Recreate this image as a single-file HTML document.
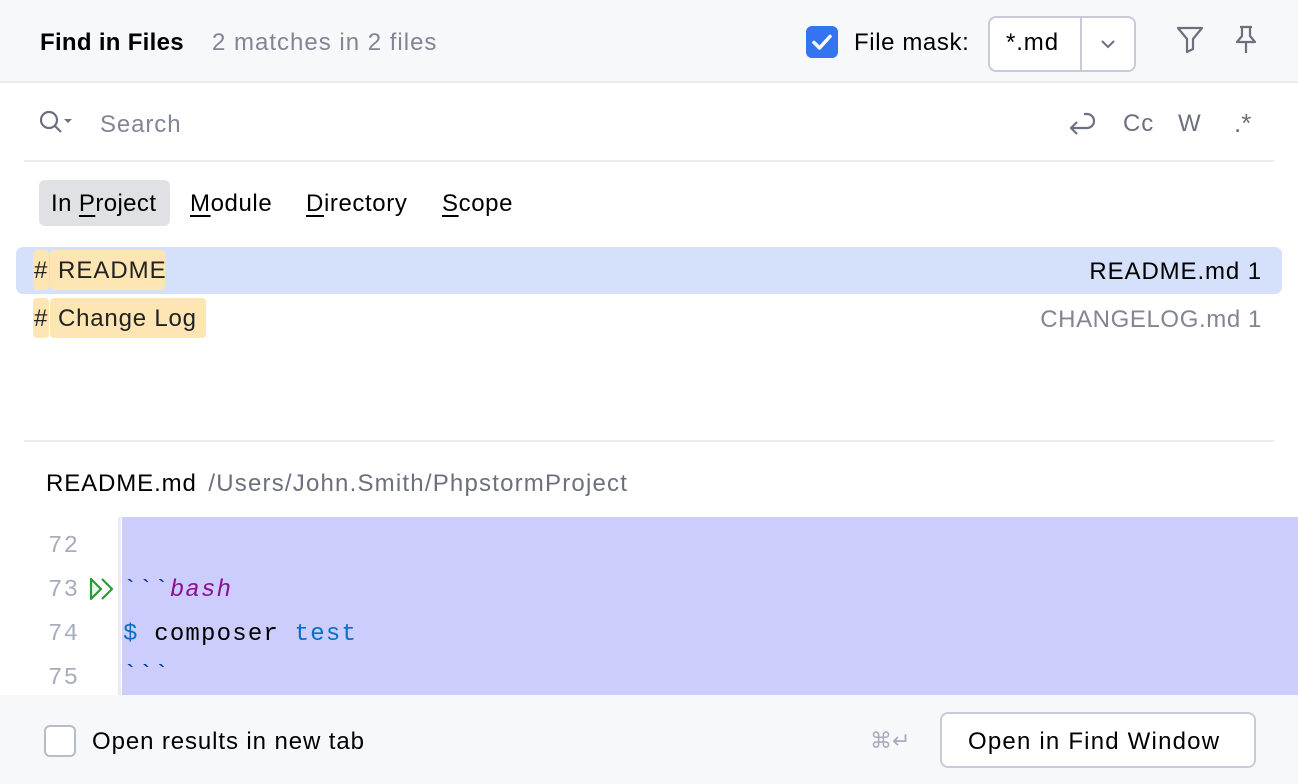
<!DOCTYPE html>
<html><head><meta charset="utf-8"><style>
*{margin:0;padding:0;box-sizing:border-box}
body{width:1298px;height:784px;overflow:hidden;background:#fff;font-family:"Liberation Sans",sans-serif;color:#000;position:relative}
.abs{position:absolute;white-space:nowrap}
.hdr{position:absolute;left:0;top:0;width:1298px;height:83px;background:#f7f8fa;border-bottom:2px solid #ebecf0}
.ftr{position:absolute;left:0;top:695px;width:1298px;height:89px;background:#f7f8fa}
.t24{font-size:24px;letter-spacing:0.9px}
.mono{font-family:"Liberation Mono",monospace;font-size:24px;letter-spacing:1.2px}
.u{text-decoration:underline;text-underline-offset:4px;text-decoration-thickness:2px}
.hl{position:absolute;background:#fde6b3;border-radius:4px}
</style></head><body>
<div class="hdr"></div>
<div class="abs t24" style="left:40px;top:29px;font-weight:bold;letter-spacing:0.3px">Find in Files</div>
<div class="abs t24" style="left:212px;top:29px;color:#818594;letter-spacing:1.0px">2 matches in 2 files</div>
<div class="abs" style="left:806px;top:26px;width:32px;height:32px;background:#3574f0;border-radius:6px">
<svg width="32" height="32" viewBox="0 0 32 32"><path d="M8 16.5l5.5 5.5L24 10.5" stroke="#fff" stroke-width="3.5" fill="none" stroke-linecap="round" stroke-linejoin="round"/></svg></div>
<div class="abs t24" style="left:854px;top:29px;letter-spacing:0.6px">File mask:</div>
<div class="abs" style="left:988px;top:16px;width:148px;height:56px;background:#fff;border:2px solid #c9ccd6;border-radius:8px"></div>
<div class="abs" style="left:1080px;top:18px;width:2px;height:52px;background:#c9ccd6"></div>
<div class="abs t24" style="left:1006px;top:29px">*.md</div>
<svg class="abs" style="left:1096px;top:36px" width="24" height="16"><path d="M6 5l6 6 6-6" stroke="#6c707e" stroke-width="2" fill="none"/></svg>
<svg class="abs" style="left:1174px;top:24px" width="32" height="32"><path d="M4 4h24l-9 11v10l-6 3V15z" stroke="#6c707e" stroke-width="2.2" fill="none" stroke-linejoin="round"/></svg>
<svg class="abs" style="left:1230px;top:24px" width="32" height="32"><path d="M10 3h12M12 3v9l-5 6h18l-5-6V3M16 18v11" stroke="#6c707e" stroke-width="2.2" fill="none" stroke-linejoin="round"/></svg>

<svg class="abs" style="left:38px;top:108px" width="36" height="32"><circle cx="11" cy="12" r="8" stroke="#6c707e" stroke-width="2.2" fill="none"/><path d="M17 18l6 6" stroke="#6c707e" stroke-width="2.2"/><path d="M26 11h8l-4 4z" fill="#6c707e"/></svg>
<div class="abs t24" style="left:100px;top:111px;color:#818594">Search</div>
<svg class="abs" style="left:1064px;top:108px" width="36" height="30"><path d="M8 22h15a7 7 0 0 0 0-14h-3M13 16l-6 6 6 6" stroke="#6c707e" stroke-width="2.2" fill="none" stroke-linejoin="round" transform="translate(0,-2)"/></svg>
<div class="abs t24" style="left:1123px;top:110px;color:#6c707e">Cc</div>
<div class="abs t24" style="left:1178px;top:110px;color:#6c707e">W</div>
<div class="abs" style="left:1234px;top:108px;color:#6c707e;font-size:26px">.*</div>
<div class="abs" style="left:24px;top:160px;width:1250px;height:2px;background:#ebecf0"></div>

<div class="abs" style="left:39px;top:180px;width:131px;height:46px;background:#dfe1e5;border-radius:6px"></div>
<div class="abs t24" style="left:51px;top:190px;letter-spacing:0.4px">In <span class="u">P</span>roject</div>
<div class="abs t24" style="left:190px;top:190px;letter-spacing:0.6px"><span class="u">M</span>odule</div>
<div class="abs t24" style="left:306px;top:190px;letter-spacing:0.6px"><span class="u">D</span>irectory</div>
<div class="abs t24" style="left:442px;top:190px;letter-spacing:0.6px"><span class="u">S</span>cope</div>

<div class="abs" style="left:16px;top:247px;width:1266px;height:47px;background:#d5e0fb;border-radius:7px"></div>
<div class="hl" style="left:33px;top:250px;width:16px;height:40px"></div>
<div class="hl" style="left:50px;top:250px;width:115px;height:40px"></div>
<div class="abs t24" style="left:34px;top:257px;color:#222">#</div>
<div class="abs t24" style="left:58px;top:257px;color:#222;letter-spacing:1px">README</div>
<div class="abs t24" style="right:36px;top:258px">README.md 1</div>
<div class="hl" style="left:33px;top:298px;width:16px;height:40px"></div>
<div class="hl" style="left:50px;top:298px;width:156px;height:40px"></div>
<div class="abs t24" style="left:34px;top:305px;color:#222">#</div>
<div class="abs t24" style="left:58px;top:305px;color:#222;letter-spacing:0.8px">Change Log</div>
<div class="abs t24" style="right:36px;top:306px;color:#818594;letter-spacing:0.6px">CHANGELOG.md 1</div>
<div class="abs" style="left:24px;top:440px;width:1250px;height:2px;background:#ebecf0"></div>

<div class="abs t24" style="left:46px;top:470px">README.md <span style="color:#6c707e;margin-left:4px;letter-spacing:1.2px">/Users/John.Smith/PhpstormProject</span></div>
<div class="abs" style="left:118px;top:517px;width:3px;height:178px;background:#ebecf0"></div>
<div class="abs" style="left:122px;top:517px;width:1176px;height:178px;background:#ccccfd"></div>
<div class="abs mono" style="left:48px;top:533px;color:#a8adbd">72</div>
<div class="abs mono" style="left:48px;top:577px;color:#a8adbd">73</div>
<div class="abs mono" style="left:48px;top:621px;color:#a8adbd">74</div>
<div class="abs mono" style="left:48px;top:665px;color:#a8adbd">75</div>
<svg class="abs" style="left:88px;top:576px" width="30" height="26"><path d="M3 3l10 10-10 10z" fill="#e8f5e9" stroke="#2a9a3b" stroke-width="2.2" stroke-linejoin="round"/><path d="M14 3l10 10-10 10" fill="none" stroke="#2a9a3b" stroke-width="2.2" stroke-linejoin="round"/></svg>
<div class="abs mono" style="left:123px;top:577px"><span style="color:#0033b3">&#96;&#96;&#96;</span><span style="color:#871094;font-style:italic">bash</span></div>
<div class="abs mono" style="left:123px;top:621px"><span style="color:#0a6fc2">$</span> composer <span style="color:#0a6fc2">test</span></div>
<div class="abs mono" style="left:123px;top:662px;color:#0033b3">&#96;&#96;&#96;</div>

<div class="ftr"></div>
<div class="abs" style="left:44px;top:725px;width:32px;height:32px;background:#fff;border:2px solid #b8bcc6;border-radius:6px"></div>
<div class="abs t24" style="left:92px;top:728px">Open results in new tab</div>
<div class="abs" style="left:870px;top:728px;font-size:22px;color:#a8adbd">⌘↵</div>
<div class="abs" style="left:940px;top:712px;width:316px;height:56px;background:#fff;border:2px solid #c9ccd6;border-radius:8px"></div>
<div class="abs t24" style="left:968px;top:728px;letter-spacing:1.2px">Open in Find Window</div>
</body></html>
